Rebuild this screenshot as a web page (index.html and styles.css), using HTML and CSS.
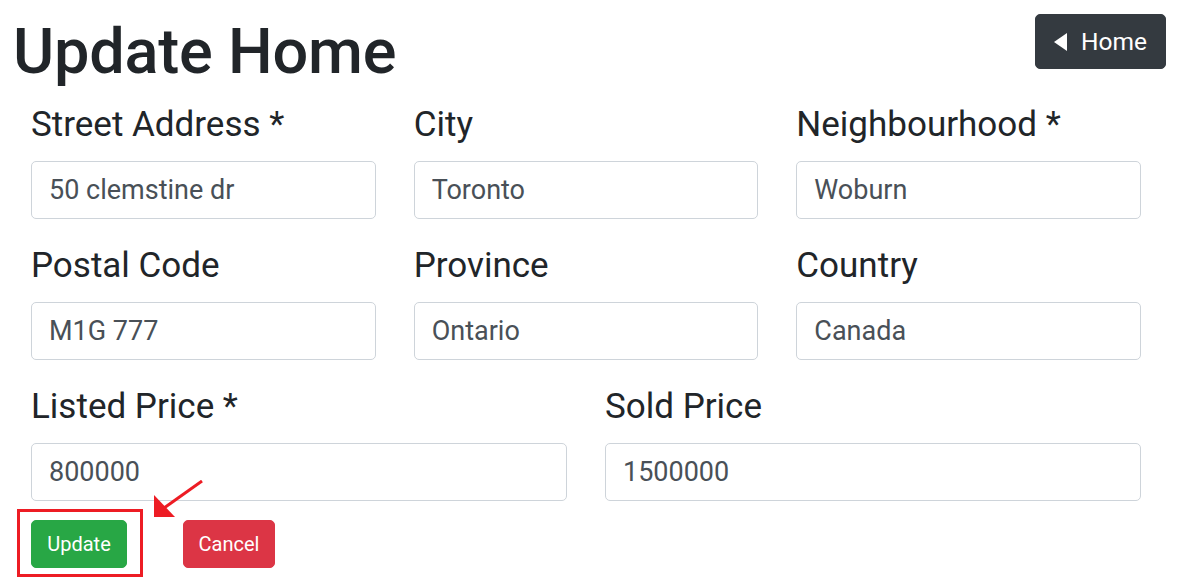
FILE: index.html
```html
<!DOCTYPE html>
<html>
<head>
<meta charset="utf-8">
<link rel="stylesheet" href="styles.css">
</head>
<body>
<div class="page">
  <header class="header">
    <h1 class="title">Update Home</h1>
    <button class="btn btn-dark">
      <svg class="caret" width="13" height="18" viewBox="0 0 13 18"><polygon points="13,0 13,18 0,9" fill="#fff"/></svg>
      <span>Home</span>
    </button>
  </header>
  <form class="form">
    <div class="row row-3">
      <div class="field"><label class="label">Street Address *</label><input class="input" value="50 clemstine dr"></div>
      <div class="field"><label class="label">City</label><input class="input" value="Toronto"></div>
      <div class="field"><label class="label">Neighbourhood *</label><input class="input" value="Woburn"></div>
    </div>
    <div class="row row-3">
      <div class="field"><label class="label">Postal Code</label><input class="input" value="M1G 777"></div>
      <div class="field"><label class="label">Province</label><input class="input" value="Ontario"></div>
      <div class="field"><label class="label">Country</label><input class="input" value="Canada"></div>
    </div>
    <div class="row row-2">
      <div class="field"><label class="label">Listed Price *</label><input class="input" value="800000"></div>
      <div class="field"><label class="label">Sold Price</label><input class="input" value="1500000"></div>
    </div>
    <div class="actions">
      <button type="button" class="btn btn-success">Update</button>
      <button type="button" class="btn btn-danger">Cancel</button>
    </div>
  </form>
  <div class="highlight-box"></div>
  <svg class="arrow" width="60" height="45" viewBox="0 0 60 45">
    <line x1="52" y1="1" x2="14" y2="28" stroke="#ed1c24" stroke-width="3"/>
    <polygon points="4,37 4,15 25,37" fill="#ed1c24"/>
  </svg>
</div>
</body>
</html>
```
FILE: styles.css
```css
* { box-sizing: border-box; }
html, body { margin: 0; padding: 0; background: #fff; }
body { font-family: Roboto, "Liberation Sans", sans-serif; color: #212529; }
.page { position: relative; width: 1190px; height: 584px; overflow: hidden; }
.header { display: flex; justify-content: space-between; align-items: flex-start; padding: 12px 24px 0 13px; height: 104px; }
.title { margin: 0; font-size: 63px; font-weight: 500; line-height: 79px; color: #212529; letter-spacing: -0.2px; }
.btn { border: 1px solid transparent; border-radius: 5px; font-family: Roboto, "Liberation Sans", sans-serif; color: #fff; cursor: pointer; display: inline-flex; align-items: center; justify-content: center; padding: 0; }
.btn-dark { margin-top: 2px; width: 131px; height: 55px; background: #343a40; border-color: #343a40; font-size: 24.5px; gap: 14px; padding-left: 0; }
.caret { display: block; }
.form { margin-left: 31px; width: 1110px; }
.row { display: grid; column-gap: 38px; margin-bottom: 26px; }
.row-3 { grid-template-columns: repeat(3, 1fr); }
.row-2 { grid-template-columns: repeat(2, 1fr); margin-bottom: 19px; }
.field { display: flex; flex-direction: column; }
.label { display: block; font-size: 35px; line-height: 41px; margin-bottom: 16px; color: #212529; }
.input { display: block; width: 100%; height: 58px; border: 1px solid #ced4da; border-radius: 5px; padding: 0 17px; font-family: Roboto, "Liberation Sans", sans-serif; font-size: 27px; color: #495057; background: #fff; outline: none; }
.actions { display: flex; gap: 56px; }
.btn-success { width: 96px; height: 48px; background: #28a745; border-color: #28a745; font-size: 20px; }
.btn-danger { width: 92px; height: 48px; background: #dc3545; border-color: #dc3545; font-size: 20px; }
.highlight-box { position: absolute; left: 17px; top: 509px; width: 126px; height: 68px; border: 3px solid #ed1c24; }
.arrow { position: absolute; left: 150px; top: 480px; }
```
